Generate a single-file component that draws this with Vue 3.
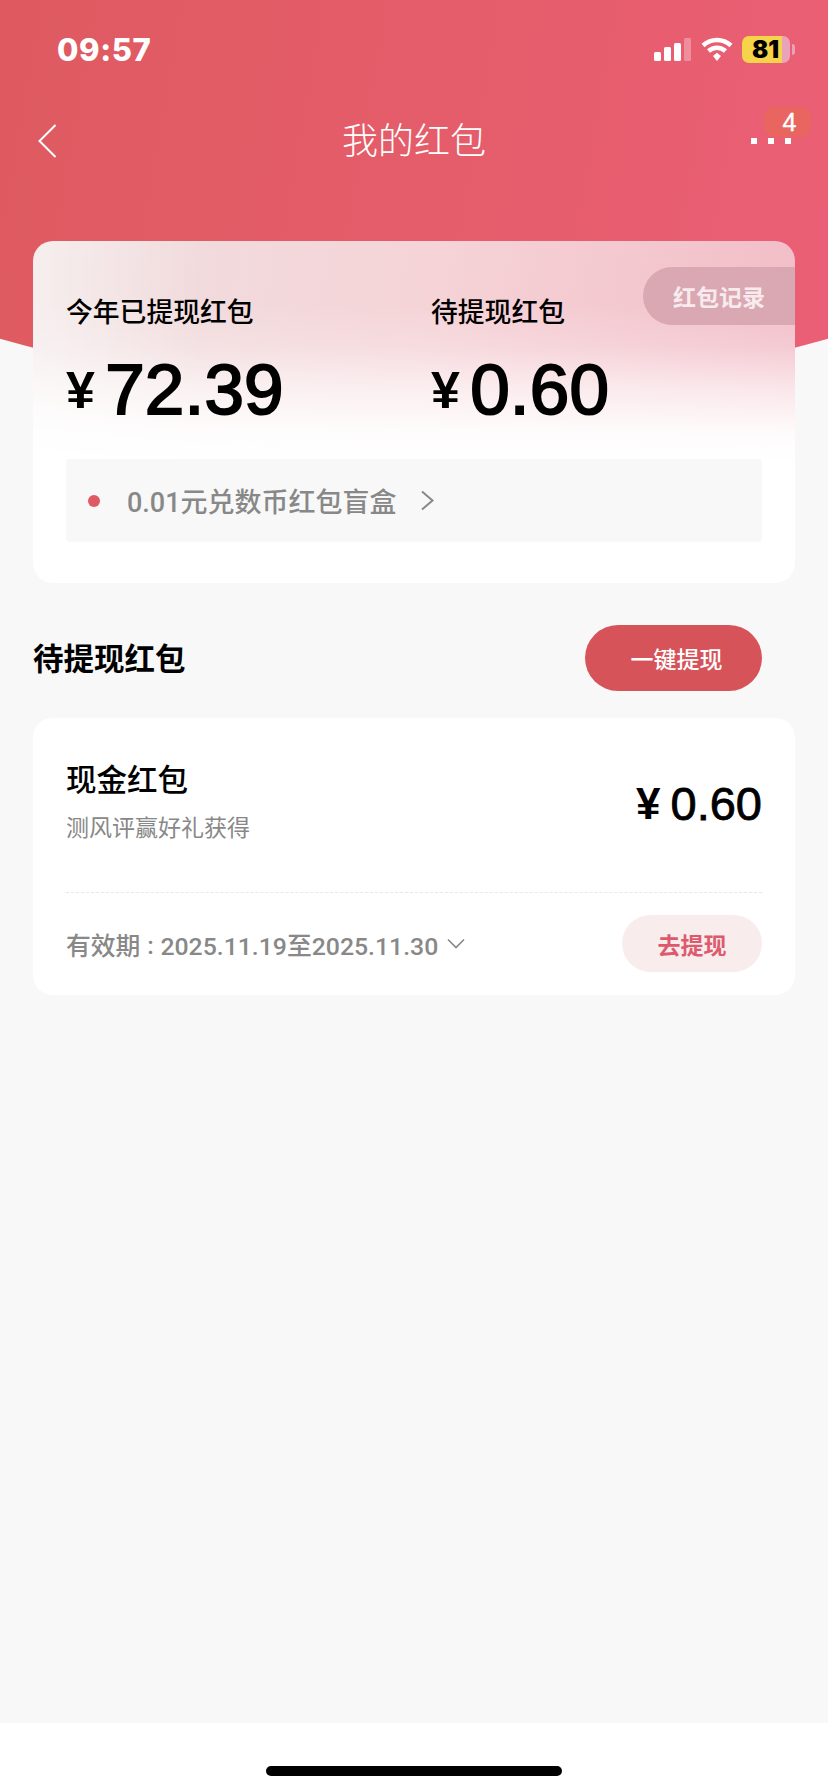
<script setup>
const stats = [
  { label: '今年已提现红包', value: '72.39' },
  { label: '待提现红包', value: '0.60' }
]
</script>

<template>
  <div class="page">
    <header class="hero">
      <div class="status">
        <span class="time">09:57</span>
        <div class="status-icons">
          <svg class="signal" width="37" height="23" viewBox="0 0 37 23">
            <rect x="0" y="14" width="7" height="9" rx="1.5" fill="#fff" />
            <rect x="10" y="9" width="7" height="14" rx="1.5" fill="#fff" />
            <rect x="20" y="5" width="7" height="18" rx="1.5" fill="#fff" />
            <rect x="30" y="0" width="7" height="23" rx="1.5" fill="#fff" opacity="0.3" />
          </svg>
          <svg class="wifi" width="32" height="25" viewBox="0 0 32 25" fill="none" stroke="#fff" stroke-width="4.5">
            <path d="M2 8.5 C10 1.2 22 1.2 30 8.5" />
            <path d="M7.5 14 C12.5 9.6 19.5 9.6 24.5 14" />
            <path d="M12 19 L16 15.8 L20 19 L16 24 Z" fill="#fff" stroke="none" />
          </svg>
          <div class="battery"><span>81</span></div>
          <i class="battery-nub"></i>
        </div>
      </div>
      <nav class="nav">
        <svg class="back" width="19" height="34" viewBox="0 0 19 34" fill="none" stroke="#fff" stroke-width="2">
          <path d="M17.5 1 L1.5 17 L17.5 33" />
        </svg>
        <h1>我的红包</h1>
        <div class="more">
          <i></i><i></i><i></i>
          <span class="badge">4</span>
        </div>
      </nav>
    </header>

    <main class="content">
      <section class="summary">
        <button class="record">红包记录</button>
        <div class="stats">
          <div v-for="s in stats" :key="s.label" class="stat">
            <div class="stat-label">{{ s.label }}</div>
            <div class="stat-value"><span class="yen">¥</span>{{ s.value }}</div>
          </div>
        </div>
        <div class="notice">
          <i class="dot"></i>
          <span>0.01元兑数币红包盲盒</span>
          <svg width="15" height="21" viewBox="0 0 15 21" fill="none" stroke="#888" stroke-width="2">
            <path d="M2 1.5 L12.5 10.5 L2 19.5" />
          </svg>
        </div>
      </section>

      <div class="section-head">
        <h2>待提现红包</h2>
        <button class="withdraw-all">一键提现</button>
      </div>

      <section class="packet">
        <div class="packet-top">
          <div>
            <div class="packet-name">现金红包</div>
            <div class="packet-desc">测风评赢好礼获得</div>
          </div>
          <div class="packet-amount"><span class="yen-sm">¥</span>0.60</div>
        </div>
        <div class="packet-bottom">
          <div class="expiry">
            <span>有效期<span class="colon">：</span>2025.11.19至2025.11.30</span>
            <svg width="18" height="11" viewBox="0 0 18 11" fill="none" stroke="#888" stroke-width="1.6">
              <path d="M1 1.5 L9 9.5 L17 1.5" />
            </svg>
          </div>
          <button class="withdraw">去提现</button>
        </div>
      </section>
    </main>

    <footer class="home-bar"><i></i></footer>
  </div>
</template>

<style>
html, body {
  margin: 0;
  background: #f8f8f8;
}
</style>

<style scoped>
.page {
  width: 828px;
  height: 1792px;
  display: flex;
  flex-direction: column;
  overflow: hidden;
  background: #f8f8f8;
  font-family: "Liberation Sans", "Noto Sans CJK SC", sans-serif;
  color: #000;
}
button {
  border: none;
  font-family: inherit;
  padding: 0;
}
.hero {
  height: 396px;
  flex-shrink: 0;
  background: linear-gradient(100deg, #de5a60 0%, #e55d6b 55%, #eb5f76 100%);
  clip-path: circle(1527px at 414px -1131px);
}
.status {
  height: 102px;
  box-sizing: border-box;
  padding: 32px 33px 0 57px;
  display: flex;
  justify-content: space-between;
  align-items: flex-start;
}
.time {
  font-family: Inter, sans-serif;
  font-weight: 800;
  font-size: 31px;
  line-height: 36px;
  color: #fff;
  letter-spacing: 0.6px;
}
.status-icons {
  display: flex;
  align-items: center;
  height: 27px;
  margin-top: 4px;
}
.signal { margin-right: 10px; }
.wifi { margin-right: 9px; }
.battery {
  width: 48px;
  height: 27px;
  border-radius: 7px;
  background: linear-gradient(90deg, #f6d44a 0 40px, #eaa2b8 40px);
  box-sizing: border-box;
  padding-left: 10px;
}
.battery span {
  font-family: Inter, sans-serif;
  font-weight: 900;
  font-size: 24px;
  line-height: 27px;
  display: block;
}
.battery-nub {
  width: 3px;
  height: 11px;
  margin-left: 2px;
  background: #eaa2b8;
  border-radius: 0 3px 3px 0;
}
.nav {
  height: 80px;
  display: flex;
  align-items: center;
  justify-content: space-between;
  padding: 0 37px 0 38px;
  position: relative;
}
.back {
  margin-top: -2px;
}
.nav h1 {
  position: absolute;
  left: 0;
  right: 0;
  margin: 0;
  text-align: center;
  font-size: 36px;
  font-weight: 300;
  color: #fff;
  line-height: 40px;
}
.more {
  display: flex;
  gap: 11px;
  position: relative;
  margin-top: -2px;
}
.more i {
  width: 6px;
  height: 6px;
  background: #fff;
}
.badge {
  position: absolute;
  left: 13px;
  top: -31px;
  width: 47px;
  height: 30px;
  border-radius: 11px;
  background: #e8665f;
  color: #fff;
  font-size: 25px;
  line-height: 30px;
  box-sizing: border-box;
  padding-left: 4px;
  text-align: center;
  -webkit-text-stroke: 0.4px #fff;
}
.content {
  flex: 1;
  margin-top: -155px;
  padding: 0 33px;
  position: relative;
}
.summary {
  height: 342px;
  box-sizing: border-box;
  padding: 54px 33px 0;
  border-radius: 20px;
  overflow: hidden;
  position: relative;
  background:
    linear-gradient(180deg, rgba(255, 255, 255, 0) 18%, rgba(255, 255, 255, 0.2) 31%, rgba(255, 255, 255, 0.62) 43%, rgba(255, 255, 255, 0.94) 56%, #fff 65%),
    linear-gradient(90deg, rgba(255, 255, 255, 0.45) 0%, rgba(255, 255, 255, 0) 22%),
    linear-gradient(100deg, #efe0e0 0%, #f5d3d7 50%, #f2bbc6 100%);
}
.record {
  position: absolute;
  right: 0;
  top: 26px;
  width: 152px;
  height: 58px;
  border-radius: 29px 0 0 29px;
  background: #d9a8b2;
  color: #f8ebee;
  font-size: 23px;
  font-weight: 700;
  text-align: left;
  padding-left: 30px;
}
.stats {
  display: flex;
}
.stat {
  flex: none;
  width: 365px;
}
.stat + .stat {
  width: auto;
}
.stat-label {
  font-size: 26.8px;
  font-weight: 500;
  line-height: 36px;
}
.stat-value {
  margin-top: 23px;
  font-size: 71px;
  line-height: 72px;
  font-weight: 400;
  letter-spacing: 0.2px;
  -webkit-text-stroke: 2px #000;
  display: flex;
  align-items: center;
}
.yen {
  font-size: 52px;
  font-weight: 700;
  margin-right: 10px;
  -webkit-text-stroke: 0;
  line-height: 72px;
}
.notice {
  margin-top: 33px;
  height: 83px;
  background: #f8f8f8;
  border-radius: 4px;
  display: flex;
  align-items: center;
  padding-left: 22px;
  font-family: Roboto, "Noto Sans CJK SC", sans-serif;
  font-size: 27px;
  font-weight: 500;
  color: #888;
}
.dot {
  width: 12px;
  height: 12px;
  border-radius: 50%;
  background: #df5a62;
  margin-right: 27px;
}
.notice svg {
  margin-left: 23px;
}
.section-head {
  height: 66px;
  margin-top: 42px;
  display: flex;
  align-items: center;
  justify-content: space-between;
  padding-right: 33px;
}
.section-head h2 {
  margin: 0 0 2px;
  font-size: 30.5px;
  font-weight: 700;
}
.withdraw-all {
  width: 177px;
  height: 66px;
  border-radius: 33px;
  background: #d6535a;
  color: #fff;
  font-size: 23px;
  font-weight: 500;
  padding-left: 6px;
}
.packet {
  margin-top: 27px;
  height: 277px;
  box-sizing: border-box;
  padding: 0 33px;
  background: #fff;
  border-radius: 20px;
}
.packet-top {
  height: 175px;
  box-sizing: border-box;
  padding-top: 42px;
  display: flex;
  justify-content: space-between;
  border-bottom: 1px dashed #e8e8e8;
}
.packet-name {
  font-size: 30.5px;
  font-weight: 500;
  line-height: 40px;
}
.packet-desc {
  margin-top: 11px;
  font-size: 23px;
  color: #888;
  line-height: 34px;
}
.packet-amount {
  font-size: 47px;
  line-height: 48px;
  margin-top: 20px;
  height: 48px;
  -webkit-text-stroke: 0.8px #000;
  display: flex;
  align-items: center;
}
.yen-sm {
  font-size: 44px;
  font-weight: 700;
  margin-right: 10px;
  -webkit-text-stroke: 0;
}
.packet-bottom {
  display: flex;
  justify-content: space-between;
  align-items: center;
  padding-top: 22px;
}
.expiry {
  display: flex;
  align-items: center;
  gap: 9px;
  font-family: Roboto, "Noto Sans CJK SC", sans-serif;
  font-size: 24.8px;
  font-weight: 500;
  color: #888;
}
.colon {
  font-family: "Noto Sans CJK TC", sans-serif;
  font-size: 20px;
}
.withdraw {
  width: 140px;
  height: 57px;
  border-radius: 29px;
  background: #f8eced;
  color: #dd5a6e;
  font-size: 23px;
  font-weight: 700;
}
.home-bar {
  height: 69px;
  flex-shrink: 0;
  background: #fff;
  display: flex;
  justify-content: center;
}
.home-bar i {
  width: 296px;
  height: 10px;
  margin-top: 43px;
  background: #000;
  border-radius: 5px;
}
</style>
